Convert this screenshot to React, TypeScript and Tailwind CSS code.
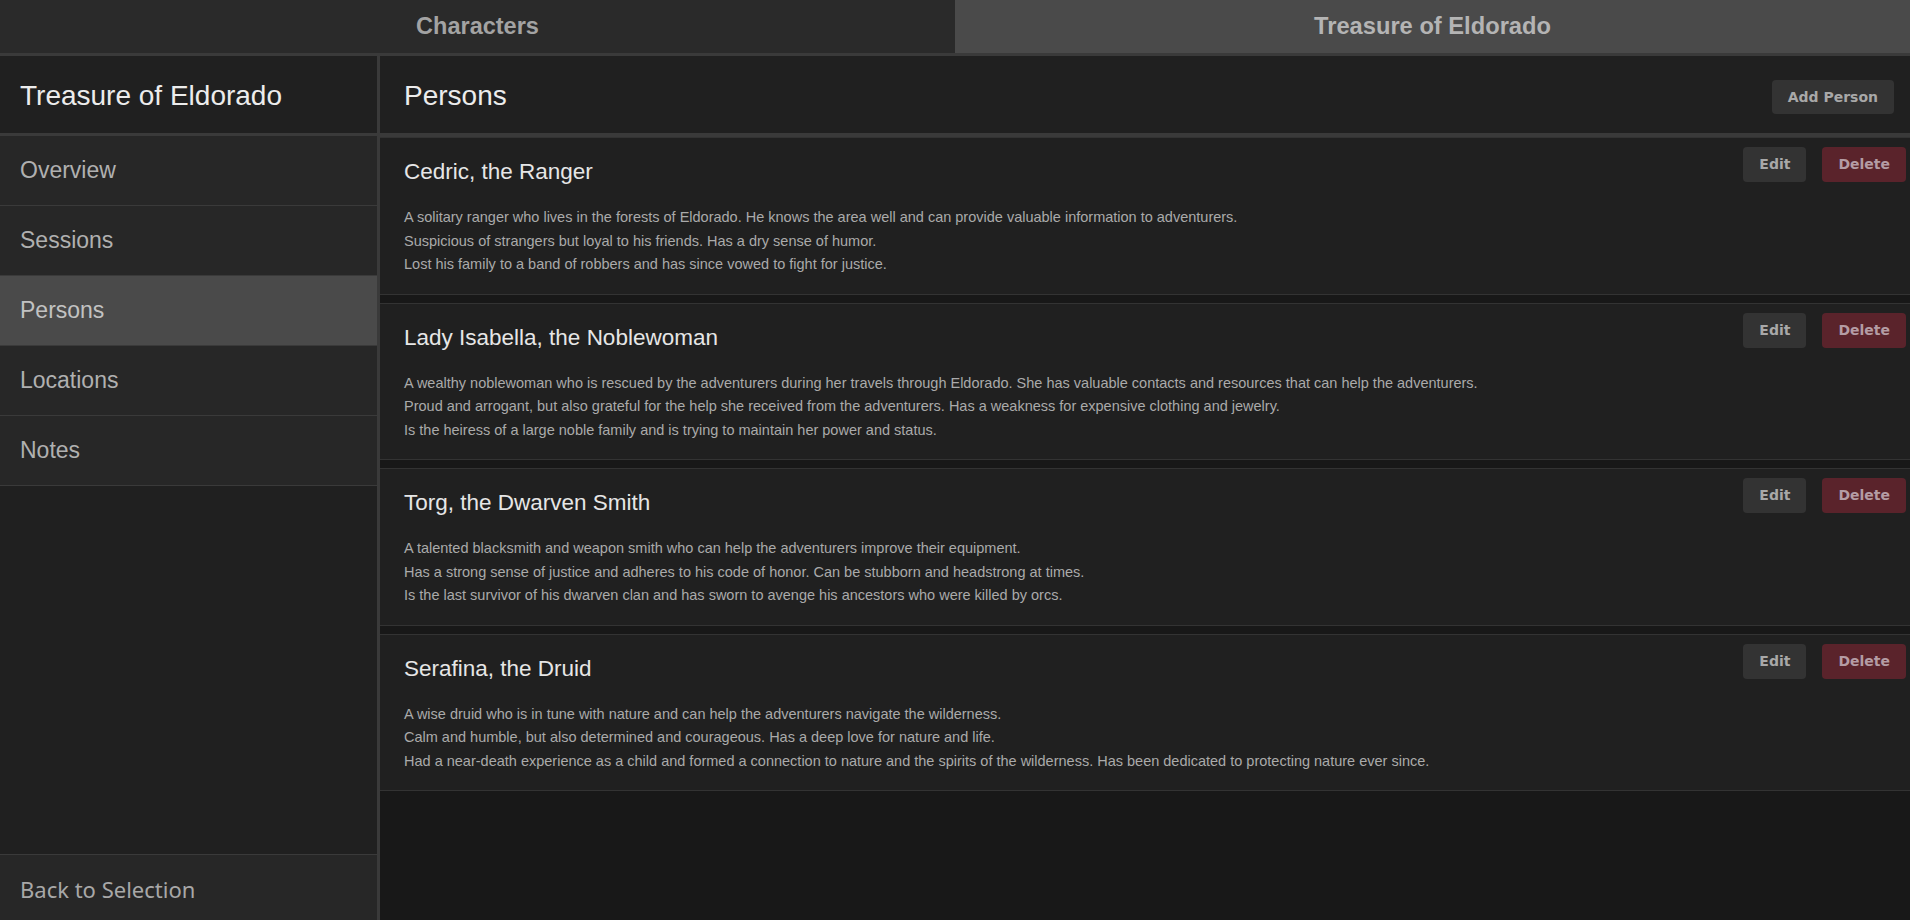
import React from "react";

const persons = [
  {
    name: "Cedric, the Ranger",
    lines: [
      "A solitary ranger who lives in the forests of Eldorado. He knows the area well and can provide valuable information to adventurers.",
      "Suspicious of strangers but loyal to his friends. Has a dry sense of humor.",
      "Lost his family to a band of robbers and has since vowed to fight for justice.",
    ],
  },
  {
    name: "Lady Isabella, the Noblewoman",
    lines: [
      "A wealthy noblewoman who is rescued by the adventurers during her travels through Eldorado. She has valuable contacts and resources that can help the adventurers.",
      "Proud and arrogant, but also grateful for the help she received from the adventurers. Has a weakness for expensive clothing and jewelry.",
      "Is the heiress of a large noble family and is trying to maintain her power and status.",
    ],
  },
  {
    name: "Torg, the Dwarven Smith",
    lines: [
      "A talented blacksmith and weapon smith who can help the adventurers improve their equipment.",
      "Has a strong sense of justice and adheres to his code of honor. Can be stubborn and headstrong at times.",
      "Is the last survivor of his dwarven clan and has sworn to avenge his ancestors who were killed by orcs.",
    ],
  },
  {
    name: "Serafina, the Druid",
    lines: [
      "A wise druid who is in tune with nature and can help the adventurers navigate the wilderness.",
      "Calm and humble, but also determined and courageous. Has a deep love for nature and life.",
      "Had a near-death experience as a child and formed a connection to nature and the spirits of the wilderness. Has been dedicated to protecting nature ever since.",
    ],
  },
];

const navItems = ["Overview", "Sessions", "Persons", "Locations", "Notes"];

export default function App() {
  return (
    <div className="flex h-screen flex-col overflow-hidden bg-[#181818] font-['Liberation_Sans',Arial,sans-serif]">
      <div className="flex h-[56px] shrink-0 border-b-[3px] border-[#3a3a3a]">
        <div className="flex flex-1 items-center justify-center bg-[#2a2a2a] text-[23.5px] font-bold text-[#a3a3a3]">
          Characters
        </div>
        <div className="flex flex-1 items-center justify-center bg-[#4a4a4a] text-[23.7px] font-bold text-[#b4b4b4]">
          Treasure of Eldorado
        </div>
      </div>
      <div className="flex min-h-0 flex-1">
        <aside className="flex w-[380px] shrink-0 flex-col border-r-[3px] border-[#3a3a3a] bg-[#202020]">
          <div className="flex h-[80px] shrink-0 items-center border-b-[3px] border-[#3a3a3a] px-[20px] pt-[2px] text-[28px] text-[#ececec]">
            Treasure of Eldorado
          </div>
          {navItems.map((item) => (
            <div
              key={item}
              className={
                item === "Persons"
                  ? "flex h-[70px] shrink-0 items-center border-b border-[#3a3a3a] bg-[#4a4a4a] px-[20px] text-[23px] text-[#c2c2c2]"
                  : "flex h-[70px] shrink-0 items-center border-b border-[#3a3a3a] bg-[#272727] px-[20px] text-[23px] text-[#b0b0b0]"
              }
            >
              {item}
            </div>
          ))}
          <div className="flex-1" />
          <div className="flex h-[66px] shrink-0 items-center border-t border-[#3a3a3a] bg-[#272727] px-[20px] pt-[4px] font-['Noto_Sans',sans-serif] text-[22px] text-[#a8a8a8]">
            Back to Selection
          </div>
        </aside>
        <main className="flex min-w-0 flex-1 flex-col">
          <div className="flex h-[81px] shrink-0 items-center justify-between border-b-4 border-[#3a3a3a] bg-[#202020] pl-[24px] pr-[16px]">
            <div className="pt-[2px] text-[28px] text-[#ececec]">Persons</div>
            <button className="mt-[5px] h-[34px] rounded-[4px] bg-[#333333] px-[16px] font-['DejaVu_Sans',sans-serif] text-[14px] font-bold text-[#a8a8a8]">
              Add Person
            </button>
          </div>
          <div className="flex flex-col">
            {persons.map((p) => (
              <div
                key={p.name}
                className="mb-[8px] flex justify-between border-y border-[#333333] bg-[#202020]"
              >
                <div className="pb-[17px] pl-[24px] pt-[20px]">
                  <div className="text-[22.5px] leading-[27px] text-[#e6e6e6]">{p.name}</div>
                  <div className="mt-[21px] text-[14.5px] leading-[23.5px] text-[#aaaaaa]">
                    {p.lines.map((l) => (
                      <div key={l}>{l}</div>
                    ))}
                  </div>
                </div>
                <div className="flex shrink-0 items-start gap-[16px] pr-[4px] pt-[9px]">
                  <button className="h-[35px] rounded-[4px] bg-[#333333] px-[16px] font-['DejaVu_Sans',sans-serif] text-[14px] font-bold text-[#a8a8a8]">
                    Edit
                  </button>
                  <button className="h-[35px] rounded-[4px] bg-[#5a232b] px-[16px] font-['DejaVu_Sans',sans-serif] text-[14px] font-bold text-[#b49ca4]">
                    Delete
                  </button>
                </div>
              </div>
            ))}
          </div>
        </main>
      </div>
    </div>
  );
}
